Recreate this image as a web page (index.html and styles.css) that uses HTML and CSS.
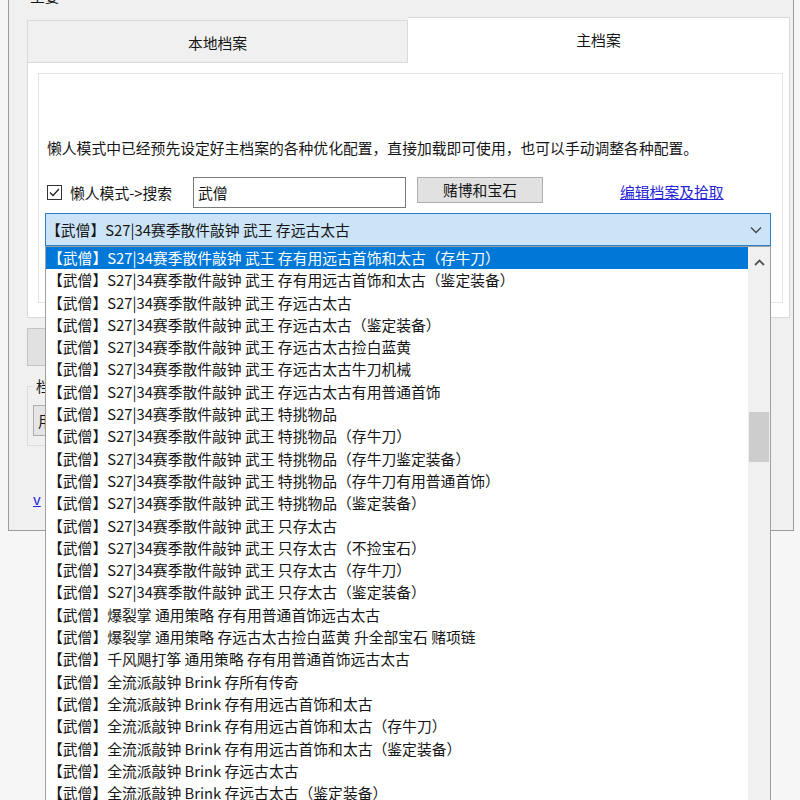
FILE: index.html
```html
<!DOCTYPE html>
<html lang="zh-CN">
<head>
<meta charset="utf-8">
<link rel="stylesheet" href="styles.css">
</head>
<body>
<div class="window">
  <div class="title">主要</div>
  <div class="tabs">
    <div class="tab">本地档案</div>
    <div class="tab active">主档案</div>
  </div>
  <div class="panel">
    <div class="inner">
      <p class="desc">懒人模式中已经预先设定好主档案的各种优化配置，直接加载即可使用，也可以手动调整各种配置。</p>
      <div class="row">
        <label class="check"><span class="box"><svg width="13" height="13" viewBox="0 0 13 13"><polyline points="2,6.5 5,9.5 11,3" fill="none" stroke="#222" stroke-width="1.3"/></svg></span>懒人模式-&gt;搜索</label>
        <div class="input">武僧</div>
        <div class="btn">赌博和宝石</div>
        <a class="link">编辑档案及拾取</a>
      </div>
      <div class="combo">
        <span class="combo-text">【武僧】S27|34赛季散件敲钟 武王 存远古太古</span>
        <svg class="chev" width="12" height="8" viewBox="0 0 12 8"><polyline points="1,1.5 6,6.5 11,1.5" fill="none" stroke="#444" stroke-width="1.3"/></svg>
        <div class="dropdown">
          <div class="items">
            <div class="item sel">【武僧】S27|34赛季散件敲钟 武王 存有用远古首饰和太古（存牛刀）</div>
            <div class="item">【武僧】S27|34赛季散件敲钟 武王 存有用远古首饰和太古（鉴定装备）</div>
            <div class="item">【武僧】S27|34赛季散件敲钟 武王 存远古太古</div>
            <div class="item">【武僧】S27|34赛季散件敲钟 武王 存远古太古（鉴定装备）</div>
            <div class="item">【武僧】S27|34赛季散件敲钟 武王 存远古太古捡白蓝黄</div>
            <div class="item">【武僧】S27|34赛季散件敲钟 武王 存远古太古牛刀机械</div>
            <div class="item">【武僧】S27|34赛季散件敲钟 武王 存远古太古有用普通首饰</div>
            <div class="item">【武僧】S27|34赛季散件敲钟 武王 特挑物品</div>
            <div class="item">【武僧】S27|34赛季散件敲钟 武王 特挑物品（存牛刀）</div>
            <div class="item">【武僧】S27|34赛季散件敲钟 武王 特挑物品（存牛刀鉴定装备）</div>
            <div class="item">【武僧】S27|34赛季散件敲钟 武王 特挑物品（存牛刀有用普通首饰）</div>
            <div class="item">【武僧】S27|34赛季散件敲钟 武王 特挑物品（鉴定装备）</div>
            <div class="item">【武僧】S27|34赛季散件敲钟 武王 只存太古</div>
            <div class="item">【武僧】S27|34赛季散件敲钟 武王 只存太古（不捡宝石）</div>
            <div class="item">【武僧】S27|34赛季散件敲钟 武王 只存太古（存牛刀）</div>
            <div class="item">【武僧】S27|34赛季散件敲钟 武王 只存太古（鉴定装备）</div>
            <div class="item">【武僧】爆裂掌 通用策略 存有用普通首饰远古太古</div>
            <div class="item">【武僧】爆裂掌 通用策略 存远古太古捡白蓝黄 升全部宝石 赌项链</div>
            <div class="item">【武僧】千风飓打筝 通用策略 存有用普通首饰远古太古</div>
            <div class="item">【武僧】全流派敲钟 Brink 存所有传奇</div>
            <div class="item">【武僧】全流派敲钟 Brink 存有用远古首饰和太古</div>
            <div class="item">【武僧】全流派敲钟 Brink 存有用远古首饰和太古（存牛刀）</div>
            <div class="item">【武僧】全流派敲钟 Brink 存有用远古首饰和太古（鉴定装备）</div>
            <div class="item">【武僧】全流派敲钟 Brink 存远古太古</div>
            <div class="item">【武僧】全流派敲钟 Brink 存远古太古（鉴定装备）</div>
          </div>
          <div class="sb">
            <div class="sb-up"><svg width="11" height="7" viewBox="0 0 11 7"><polyline points="1,6 5.5,1.5 10,6" fill="none" stroke="#555" stroke-width="1.8"/></svg></div>
            <div class="thumb"></div>
          </div>
        </div>
      </div>
    </div>
  </div>
  <div class="lbtn"></div>
  <fieldset class="group">
    <legend>档</legend>
    <div class="select">用</div>
  </fieldset>
  <a class="ver">v</a>
</div>
</body>
</html>
```

FILE: styles.css
```css
html, body {
  margin: 0;
  padding: 0;
  overflow: hidden;
}
body {
  width: 800px;
  height: 800px;
  background: #f6f6f6;
  font-family: "Noto Sans CJK SC", "Noto Sans", sans-serif;
  font-size: 14.8px;
  color: #151515;
}
.window {
  display: flow-root;
  box-sizing: border-box;
  margin-left: 8px;
  width: 786px;
  height: 531px;
  border: 1px solid #9c9c9c;
  border-top: 0;
  background: #f0f0f0;
}
.title {
  margin: -14px 0 0 21px;
  height: 20px;
  line-height: 20px;
}
.tabs {
  display: flex;
  align-items: flex-end;
  margin: 11px 0 0 18px;
  height: 45px;
}
.tab {
  box-sizing: border-box;
  width: 381px;
  height: 42px;
  padding-top: 1px;
  border: 1px solid #d9d9d9;
  border-bottom: 0;
  background: #f0f0f0;
  display: flex;
  align-items: center;
  justify-content: center;
}
.tab.active {
  width: 382px;
  height: 46px;
  padding-top: 0;
  padding-bottom: 2px;
  margin-bottom: -1px;
  border-left: 0;
  background: #fff;
  position: relative;
  z-index: 1;
}
.panel {
  box-sizing: border-box;
  margin-left: 18px;
  width: 763px;
  height: 256px;
  border: 1px solid #d9d9d9;
  background: #fff;
  padding: 10px 6px 0 10px;
}
.inner {
  box-sizing: border-box;
  height: 230px;
  border: 1px solid #e3e3e3;
}
.desc {
  margin: 64px 0 0 8px;
  line-height: 20px;
  white-space: nowrap;
}
.row {
  display: flex;
  align-items: flex-start;
  margin: 19px 0 0 8px;
  height: 31px;
}
.check {
  width: 146px;
  height: 30px;
  display: flex;
  align-items: center;
  gap: 8px;
}
.box {
  box-sizing: border-box;
  width: 15px;
  height: 15px;
  border: 1px solid #333;
  background: #fff;
  display: flex;
}
.input {
  box-sizing: border-box;
  width: 213px;
  height: 31px;
  margin-right: 11px;
  padding-left: 4px;
  border: 1px solid #7a7a7a;
  background: #fff;
  line-height: 29px;
}
.btn {
  box-sizing: border-box;
  width: 126px;
  height: 26px;
  border: 1px solid #adadad;
  background: #e1e1e1;
  text-align: center;
  line-height: 24px;
}
.link {
  margin-left: 77px;
  line-height: 30px;
  color: #2424d6;
  text-decoration: underline;
}
.combo {
  position: relative;
  box-sizing: border-box;
  margin: 5px 0 0 6px;
  width: 726px;
  height: 33px;
  border: 1px solid #2a7fc9;
  background: #cce4f7;
  display: flex;
  align-items: center;
  padding-left: 0;
}
.combo-text {
  white-space: nowrap;
}
.chev {
  margin-left: auto;
  margin-right: 8px;
}
.dropdown {
  position: absolute;
  left: -1px;
  top: 100%;
  margin-top: 1px;
  box-sizing: border-box;
  width: 726px;
  border: 1px solid #a0a0a0;
  background: #fff;
  display: flex;
  z-index: 5;
}
.items {
  flex: 1;
}
.item {
  height: 22.3px;
  line-height: 22.3px;
  padding-left: 2px;
  white-space: nowrap;
}
.item.sel {
  background: #0078d7;
  color: #fff;
}
.sb {
  width: 22px;
  background: #f0f0f0;
}
.sb-up {
  height: 30px;
  display: flex;
  align-items: center;
  justify-content: center;
}
.thumb {
  margin: 135px 1px 0;
  height: 50px;
  background: #cdcdcd;
}
.lbtn {
  box-sizing: border-box;
  margin: 10px 0 0 18px;
  width: 300px;
  height: 38px;
  border: 1px solid #c4c4c4;
  background: #e1e1e1;
}
.group {
  margin: 10px 0 0 18px;
  width: 300px;
  padding: 0 5px 9px;
  border: 1px solid #dcdcdc;
}
.group legend {
  padding: 0 3px;
  line-height: 20px;
}
.select {
  box-sizing: border-box;
  margin-top: 9px;
  height: 31px;
  padding-left: 4px;
  border: 1px solid #adadad;
  background: #e5e5e5;
  line-height: 29px;
}
.ver {
  display: block;
  margin: 43px 0 0 24px;
  line-height: 20px;
  color: #2424d6;
  text-decoration: underline;
}
```
